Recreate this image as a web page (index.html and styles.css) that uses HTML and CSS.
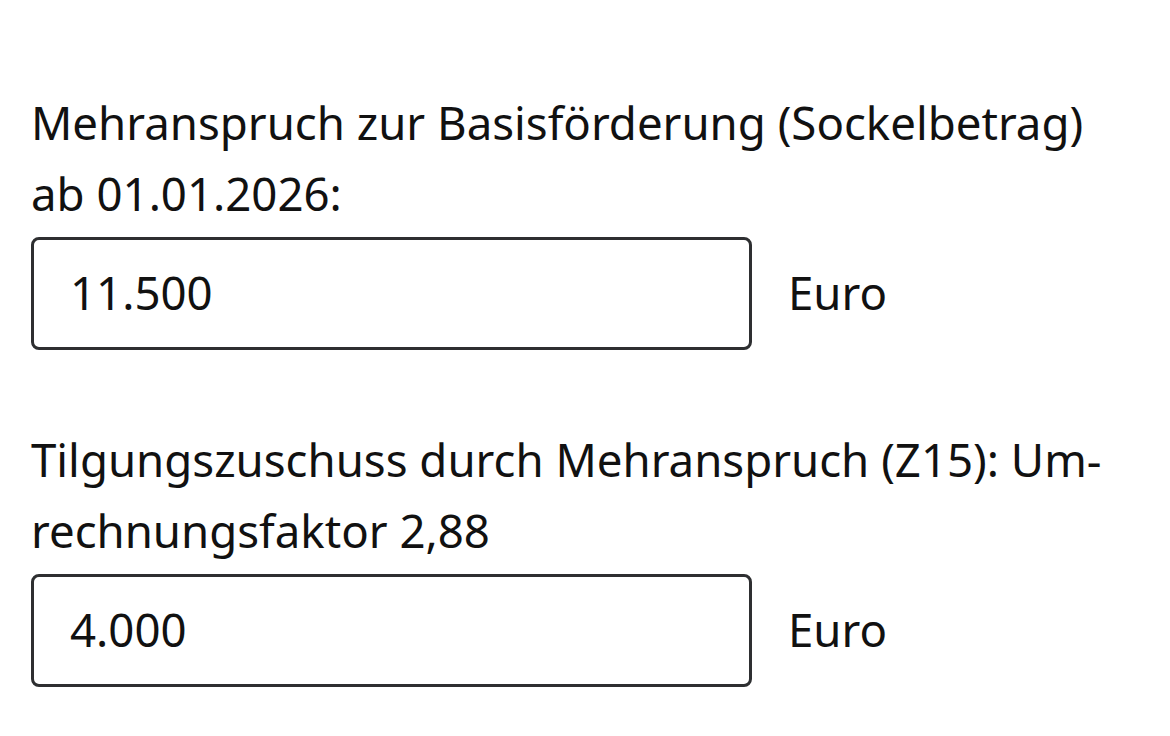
FILE: index.html
```html
<!DOCTYPE html>
<html lang="de">
<head>
<meta charset="utf-8">
<link rel="stylesheet" href="styles.css">
</head>
<body>
<main class="form">
  <div class="field">
    <label class="label" for="f1">Mehranspruch zur Basisförderung (Sockelbetrag) ab 01.01.2026:</label>
    <div class="row">
      <input class="input" id="f1" type="text" value="11.500">
      <span class="unit">Euro</span>
    </div>
  </div>
  <div class="field">
    <label class="label" for="f2">Tilgungszuschuss durch Mehranspruch (Z15): Um&shy;rechnungsfaktor 2,88</label>
    <div class="row">
      <input class="input" id="f2" type="text" value="4.000">
      <span class="unit">Euro</span>
    </div>
  </div>
</main>
</body>
</html>
```
FILE: styles.css
```css
html, body {
  margin: 0;
  padding: 0;
  background: #ffffff;
}
body {
  font-family: "Noto Sans", "Open Sans", sans-serif;
  color: #111111;
}
.form {
  display: flex;
  flex-direction: column;
  gap: 74px;
  padding: 87px 0 0 31px;
  width: 1090px;
}
.field {
  display: flex;
  flex-direction: column;
  gap: 8px;
}
.label {
  font-size: 45.6px;
  line-height: 71px;
  hyphens: manual;
}
.row {
  display: flex;
  align-items: center;
  gap: 36px;
}
.input {
  box-sizing: border-box;
  width: 721px;
  height: 113px;
  margin: 0;
  border: 3px solid #2e2f31;
  border-radius: 8px;
  padding: 0 0 4px 36px;
  font-family: "Noto Sans", "Open Sans", sans-serif;
  font-size: 45.6px;
  color: #111111;
  background: #ffffff;
  outline: none;
}
.unit {
  font-size: 45.6px;
  padding-bottom: 4px;
}
```
